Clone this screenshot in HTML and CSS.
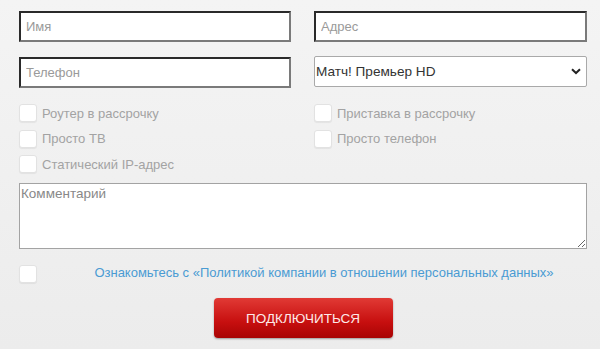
FILE: index.html
```html
<!DOCTYPE html>
<html lang="ru">
<head>
<meta charset="utf-8">
<title>Форма</title>
<link rel="stylesheet" href="styles.css">
</head>
<body>
<form class="form">
  <div class="fields">
    <input class="field" type="text" placeholder="Имя">
    <input class="field" type="text" placeholder="Адрес">
    <input class="field" type="text" placeholder="Телефон">
    <div class="select-wrap">
      <select class="select">
        <option>Матч! Премьер HD</option>
      </select>
      <svg class="chevron" width="10" height="7" viewBox="0 0 10 7"><path d="M1 1.2 L5 5 L9 1.2" fill="none" stroke="#222" stroke-width="2"/></svg>
    </div>
  </div>
  <div class="options">
    <div class="opt-col">
      <label class="opt"><input type="checkbox" class="box"><span>Роутер в рассрочку</span></label>
      <label class="opt"><input type="checkbox" class="box"><span>Просто ТВ</span></label>
      <label class="opt"><input type="checkbox" class="box"><span>Статический IP-адрес</span></label>
    </div>
    <div class="opt-col">
      <label class="opt"><input type="checkbox" class="box"><span>Приставка в рассрочку</span></label>
      <label class="opt"><input type="checkbox" class="box"><span>Просто телефон</span></label>
    </div>
  </div>
  <textarea class="comment" placeholder="Комментарий"></textarea>
  <div class="agree">
    <input type="checkbox" class="box">
    <a class="policy" href="#">Ознакомьтесь с «Политикой компании в отношении персональных данных»</a>
  </div>
  <div class="actions">
    <button type="button" class="submit">Подключиться</button>
  </div>
</form>
</body>
</html>
```
FILE: styles.css
```css
html, body {
  margin: 0;
  height: 100%;
}
body {
  background: linear-gradient(#f4f4f4, #ececec);
  font-family: "Liberation Sans", Arial, sans-serif;
  font-size: 13px;
}
.form {
  width: 568px;
  padding: 11px 0 0 19px;
  display: flex;
  flex-direction: column;
}
.fields {
  display: grid;
  grid-template-columns: 272px 273px;
  column-gap: 23px;
  row-gap: 15px;
}
.field {
  box-sizing: border-box;
  height: 31px;
  margin: 0;
  padding: 0 5px;
  border: 2px solid;
  border-color: #2a2a2a #7a7a7a #7a7a7a #2a2a2a;
  background: #fff;
  font: 13px "Liberation Sans", Arial, sans-serif;
  color: #333;
  outline: none;
}
.field::placeholder {
  color: #9a9a9a;
}
.select-wrap {
  position: relative;
  margin-top: -1px;
  height: 31px;
}
.select {
  appearance: none;
  -webkit-appearance: none;
  box-sizing: border-box;
  width: 100%;
  height: 31px;
  margin: 0;
  padding: 0 0 0 1px;
  border: 1px solid #a9a9a9;
  border-radius: 2px;
  background: #fff;
  font: 13.6px "Liberation Sans", Arial, sans-serif;
  color: #333;
}
.chevron {
  position: absolute;
  right: 6px;
  top: 12px;
  pointer-events: none;
}
.options {
  display: grid;
  grid-template-columns: 272px 273px;
  column-gap: 23px;
  margin-top: 16px;
}
.opt-col {
  display: flex;
  flex-direction: column;
  gap: 7.5px;
}
.opt {
  display: flex;
  align-items: center;
  gap: 5px;
  height: 18px;
  color: #a3a3a3;
  font-size: 13px;
}
.box {
  appearance: none;
  -webkit-appearance: none;
  box-sizing: border-box;
  width: 18px;
  height: 18px;
  margin: 0;
  flex: none;
  background: #fff;
  border: 1px solid #e2e2e2;
  border-radius: 3px;
  box-shadow: 0 1px 1px rgba(0,0,0,0.06);
}
.comment {
  box-sizing: border-box;
  display: block;
  width: 568px;
  height: 66px;
  margin: 10px 0 0;
  padding: 2px 1px;
  border: 1px solid #a3a3a3;
  background: #fff;
  font: 13.5px "Liberation Sans", Arial, sans-serif;
  color: #333;
  outline: none;
}
.comment::placeholder {
  color: #888;
}
.agree {
  display: flex;
  align-items: center;
  margin-top: 16px;
  height: 18px;
}
.policy {
  flex: 1;
  margin-left: 24px;
  text-align: center;
  color: #4a9bd3;
  text-decoration: none;
  font-size: 13px;
  margin-top: -3px;
}
.actions {
  display: flex;
  justify-content: center;
  margin-top: 15px;
}
.submit {
  width: 179px;
  height: 40px;
  border: none;
  border-radius: 4px;
  background: linear-gradient(#e13a35, #c70f0f 60%, #a80404);
  box-shadow: 0 1px 2px rgba(0,0,0,0.35);
  color: #fde9e9;
  font: 13.5px "Liberation Sans", Arial, sans-serif;
  text-transform: uppercase;
  padding: 0;
}
```
